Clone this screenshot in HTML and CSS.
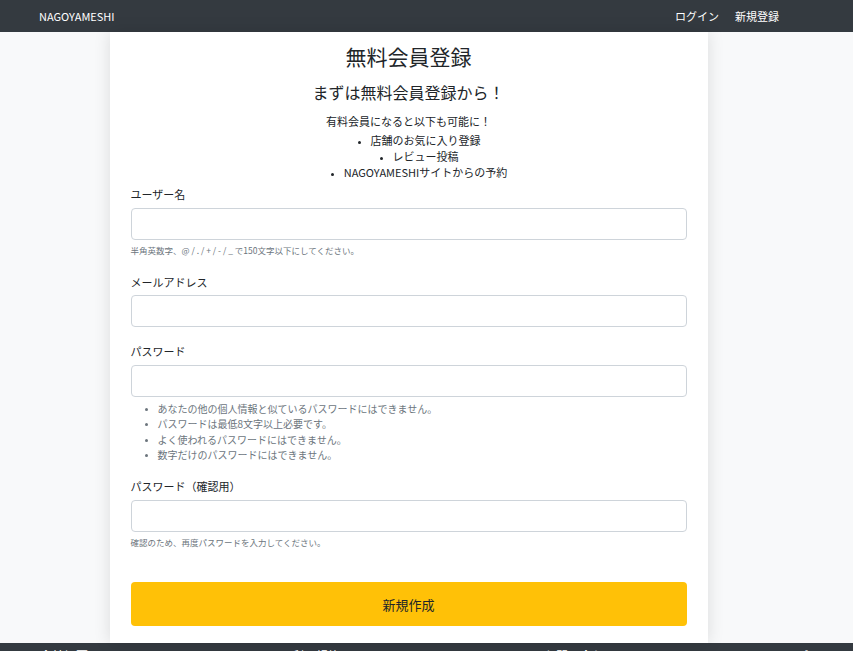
FILE: index.html
```html
<!DOCTYPE html>
<html lang="ja">
<head>
<meta charset="utf-8">
<title>NAGOYAMESHI</title>
<link rel="stylesheet" href="styles.css">
</head>
<body>
<header class="navbar">
  <a class="brand" href="#">NAGOYAMESHI</a>
  <nav class="nav-links">
    <a href="#">ログイン</a>
    <a href="#">新規登録</a>
  </nav>
</header>
<main class="page">
  <section class="card">
    <h1 class="title">無料会員登録</h1>
    <h2 class="subtitle">まずは無料会員登録から！</h2>
    <p class="lead">有料会員になると以下も可能に！</p>
    <ul class="perks">
      <li>店舗のお気に入り登録</li>
      <li>レビュー投稿</li>
      <li>NAGOYAMESHIサイトからの予約</li>
    </ul>
    <form class="form">
      <div class="group group-user">
        <label class="label">ユーザー名</label>
        <input class="input" type="text">
        <div class="help">半角英数字、@ / . / + / - / _ で150文字以下にしてください。</div>
      </div>
      <div class="group group-mail">
        <label class="label">メールアドレス</label>
        <input class="input" type="email">
      </div>
      <div class="group group-pass">
        <label class="label">パスワード</label>
        <input class="input" type="password">
        <ul class="rules">
          <li>あなたの他の個人情報と似ているパスワードにはできません。</li>
          <li>パスワードは最低8文字以上必要です。</li>
          <li>よく使われるパスワードにはできません。</li>
          <li>数字だけのパスワードにはできません。</li>
        </ul>
      </div>
      <div class="group group-confirm">
        <label class="label">パスワード（確認用）</label>
        <input class="input" type="password">
        <div class="help">確認のため、再度パスワードを入力してください。</div>
      </div>
      <button class="submit" type="button">新規作成</button>
    </form>
  </section>
</main>
<footer class="footer">
  <div class="footer-col">会社概要</div>
  <div class="footer-col">利用規約</div>
  <div class="footer-col">お問い合わせ</div>
  <div class="footer-col">プライバシー</div>
</footer>
</body>
</html>
```
FILE: styles.css
```css
* { box-sizing: border-box; }
html, body { margin: 0; padding: 0; }
body {
  background: #f8f9fa;
  font-family: "Noto Sans CJK JP", "Liberation Sans", sans-serif;
  color: #212529;
  overflow: hidden;
}
.navbar {
  height: 32px;
  background: #343a40;
  display: flex;
  align-items: center;
  justify-content: space-between;
  padding: 0 74px 0 39px;
}
.navbar a {
  color: #ffffff;
  text-decoration: none;
  font-size: 11px;
  line-height: 16px;
}
.nav-links { display: flex; gap: 16px; }
.page {
  display: flex;
  justify-content: center;
  padding-right: 36px;
}
.card {
  width: 598px;
  height: 611px;
  background: #fff;
  box-shadow: 0 0 16px rgba(0,0,0,0.12);
  padding: 11px 21px 0 21px;
}
.title {
  margin: 0;
  text-align: center;
  font-size: 21px;
  line-height: 26px;
  font-weight: 400;
}
.subtitle {
  margin: 13px 0 0;
  text-align: center;
  font-size: 16px;
  line-height: 20px;
  font-weight: 400;
}
.lead {
  margin: 11px 0 0;
  text-align: center;
  font-size: 11px;
  line-height: 16px;
}
.perks {
  margin: 3px 0 0;
  padding: 0 0 0 21px;
  text-align: center;
  font-size: 11px;
  line-height: 16px;
  list-style-position: inside;
}
.perks li { height: 16px; }
.perks li::marker { font-size: 9px; }
.form { margin-top: 6px; }
.group { margin-bottom: 16px; }
.group-user { margin-bottom: 18px; }
.label {
  display: block;
  font-size: 11px;
  line-height: 16px;
  margin-bottom: 6px;
}
.group-mail .label { margin-bottom: 5px; }
.input {
  display: block;
  width: 100%;
  height: 32px;
  border: 1px solid #ced4da;
  border-radius: 4px;
  background: #fff;
  margin: 0;
}
.help {
  margin-top: 4px;
  font-size: 8.5px;
  line-height: 12px;
  color: #6c757d;
}
.rules {
  margin: 4px 0 0;
  padding-left: 27px;
  font-size: 10px;
  line-height: 15.3px;
  color: #6c757d;
}
.rules li::marker { font-size: 8px; }
.group-pass { margin-bottom: 16px; }
.group-confirm { margin-bottom: 34px; }
.submit {
  display: block;
  width: 100%;
  height: 44px;
  border: none;
  border-radius: 4px;
  background: #ffc107;
  color: #212529;
  font-family: inherit;
  font-size: 13px;
}
.footer {
  height: 30px;
  background: #343a40;
  display: flex;
  padding: 5px 0 0 40px;
  overflow: hidden;
}
.footer-col {
  flex: 0 0 252px;
  color: #fff;
  font-size: 12px;
  line-height: 16px;
}
```
